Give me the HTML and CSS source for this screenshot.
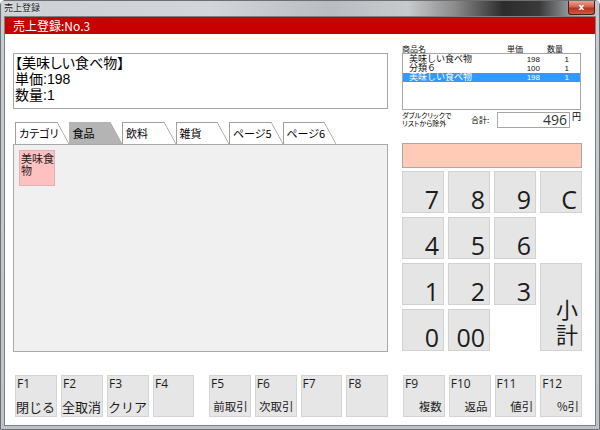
FILE: index.html
```html
<!DOCTYPE html>
<html lang="ja">
<head>
<meta charset="utf-8">
<title>売上登録</title>
<link rel="stylesheet" href="styles.css">
</head>
<body>
<div class="window">
  <div class="titlebar">
    <span class="title">売上登録</span>
    <span class="close">x</span>
  </div>
  <div class="client">
    <div class="header">売上登録:No.3</div>
    <div class="main">
      <div class="left">
        <div class="info">【美味しい食べ物】<br>単価:198<br>数量:1</div>
        <div class="tabs">
          <div class="tab">カテゴリ</div>
          <div class="tab active">食品</div>
          <div class="tab">飲料</div>
          <div class="tab">雑貨</div>
          <div class="tab">ページ5</div>
          <div class="tab">ページ6</div>
        </div>
        <div class="panel">
          <div class="item">美味食物</div>
        </div>
      </div>
      <div class="right">
        <div class="cols-head">
          <span class="ch-name">商品名</span>
          <span class="ch-price">単価</span>
          <span class="ch-qty">数量</span>
        </div>
        <div class="list">
          <div class="row"><span>美味しい食べ物</span><span class="num">198</span><span class="num">1</span></div>
          <div class="row"><span>分類６</span><span class="num">100</span><span class="num">1</span></div>
          <div class="row selected"><span>美味しい食べ物</span><span class="num">198</span><span class="num">1</span></div>
        </div>
        <div class="sum-row">
          <div class="hint">ダブルクリックで<br>リストから除外</div>
          <div class="sum-label">合計:</div>
          <div class="total">496</div>
          <div class="yen">円</div>
        </div>
        <div class="display"></div>
        <div class="keypad">
          <div class="key">7</div>
          <div class="key">8</div>
          <div class="key">9</div>
          <div class="key">C</div>
          <div class="key">4</div>
          <div class="key">5</div>
          <div class="key">6</div>
          <div class="key blank"></div>
          <div class="key">1</div>
          <div class="key">2</div>
          <div class="key">3</div>
          <div class="key subtotal"><span>小<br>計</span></div>
          <div class="key">0</div>
          <div class="key">00</div>
        </div>
      </div>
    </div>
    <div class="fkeys">
      <div class="group">
        <div class="fkey"><span class="fk-num">F1</span><span class="fk-name">閉じる</span></div>
        <div class="fkey"><span class="fk-num">F2</span><span class="fk-name">全取消</span></div>
        <div class="fkey"><span class="fk-num">F3</span><span class="fk-name">クリア</span></div>
        <div class="fkey"><span class="fk-num">F4</span><span class="fk-name"></span></div>
      </div>
      <div class="group">
        <div class="fkey"><span class="fk-num">F5</span><span class="fk-name small">前取引</span></div>
        <div class="fkey"><span class="fk-num">F6</span><span class="fk-name small">次取引</span></div>
        <div class="fkey"><span class="fk-num">F7</span><span class="fk-name small"></span></div>
        <div class="fkey"><span class="fk-num">F8</span><span class="fk-name small"></span></div>
      </div>
      <div class="group">
        <div class="fkey"><span class="fk-num">F9</span><span class="fk-name small">複数</span></div>
        <div class="fkey"><span class="fk-num">F10</span><span class="fk-name small">返品</span></div>
        <div class="fkey"><span class="fk-num">F11</span><span class="fk-name small">値引</span></div>
        <div class="fkey"><span class="fk-num">F12</span><span class="fk-name small">%引</span></div>
      </div>
    </div>
  </div>
</div>
</body>
</html>
```
FILE: styles.css
```css
* { box-sizing: border-box; }
html, body { margin: 0; padding: 0; }
body {
  width: 600px;
  height: 430px;
  overflow: hidden;
  font-family: "Noto Sans CJK JP", "Noto Sans", sans-serif;
  color: #000;
  background: #fff;
}
.window {
  width: 600px;
  height: 430px;
  display: flex;
  flex-direction: column;
  border: 1px solid #6c7075;
  border-radius: 5px 5px 0 0;
  background: linear-gradient(180deg, #c9cdd2, #bfc3c8);
}
.titlebar {
  height: 15px;
  display: flex;
  justify-content: space-between;
  align-items: flex-start;
  padding: 0 4px 0 3px;
  background: linear-gradient(90deg, #cdd1d6 0%, #d2d5d9 35%, #b9bdc1 55%, #c7cacd 68%, #8a8a8a 76%, #2c2c2c 84%, #3a3a3a 90%, #a6aaae 96%, #c4c8cc 100%);
}
.title {
  font-size: 9px;
  line-height: 14px;
  color: #1b1b1b;
  text-shadow: 0 0 3px #fff;
}
.close {
  width: 27px;
  height: 14px;
  border: 1px solid #4a1e16;
  border-top: none;
  border-radius: 0 0 3px 3px;
  background: linear-gradient(180deg, #e7a393 0%, #d2624c 45%, #b8321c 55%, #cf5a3e 100%);
  color: #fff;
  font-family: "DejaVu Sans", sans-serif;
  font-weight: bold;
  font-size: 9px;
  line-height: 12px;
  text-align: center;
}
.client {
  flex: 1;
  margin: 0 3px 3px;
  border: 1px solid #7c8085;
  background: #fff;
  display: flex;
  flex-direction: column;
}
.header {
  height: 17px;
  background: #c80000;
  color: #fff;
  font-size: 12px;
  line-height: 17px;
  padding-left: 8px;
}
.main {
  height: 318px;
  display: flex;
  gap: 14px;
  padding: 0 8px 0 8px;
}
.left {
  width: 375px;
  padding-top: 19px;
  display: flex;
  flex-direction: column;
}
.info {
  height: 56px;
  border: 1px solid #a6a6a6;
  padding: 1px;
  font-family: "Liberation Sans", "Noto Sans CJK JP", sans-serif;
  font-size: 14px;
  line-height: 16px;
  font-weight: 400;
  font-feature-settings: "palt";
}
.tabs {
  margin-top: 13px;
  height: 22px;
  display: flex;
  padding-left: 2px;
}
.tab {
  position: relative;
  width: 41.5px;
  height: 22px;
  margin-right: 12px;
  border-left: 1px solid #a0a0a0;
  border-top: 1px solid #a0a0a0;
  font-size: 11px;
  line-height: 20px;
  padding-left: 3px;
  white-space: nowrap;
  font-feature-settings: "palt";
  background: #fff;
}
.tab::after {
  content: "";
  position: absolute;
  left: 100%;
  top: -1px;
  width: 12px;
  height: 22px;
  background: linear-gradient(to top right, transparent calc(50% - 0.7px), #a0a0a0 50%, transparent calc(50% + 0.7px));
}
.tab.active {
  background: #b4b4b4;
  border-left-color: #b4b4b4;
  border-top-color: #b4b4b4;
}
.tab.active::after {
  background: linear-gradient(to top right, #b4b4b4 calc(50% - 0.7px), #a8a8a8 50%, transparent calc(50% + 0.7px));
}
.panel {
  flex: 1;
  background: #f0f0f0;
  border: 1px solid #a8a8a8;
  padding: 5px;
}
.item {
  width: 36px;
  height: 36px;
  background: #ffc0c0;
  border: 1px solid #dab4b4;
  font-size: 11px;
  line-height: 12px;
  padding: 1px 0 0 1px;
  word-break: break-all;
  color: #222;
}
.right {
  width: 180px;
  padding-top: 10px;
  display: flex;
  flex-direction: column;
}
.cols-head {
  height: 9px;
  display: flex;
  font-size: 8px;
  line-height: 9px;
  color: #111;
}
.ch-name { width: 105px; }
.ch-price { width: 40px; }
.list {
  width: 179px;
  height: 57px;
  border: 1px solid #a6a6a6;
  padding-top: 1px;
}
.row {
  display: grid;
  grid-template-columns: 1fr 40px 29px;
  height: 9px;
  font-family: "Liberation Sans", "Noto Sans CJK JP", sans-serif;
  font-size: 9px;
  line-height: 9px;
  padding: 0 11px 0 6px;
  color: #111;
  white-space: nowrap;
}
.row .num { text-align: right; font-size: 8px; }
.row.selected { background: #3399ff; color: #fff; }
.sum-row {
  margin-top: 2px;
  height: 16px;
  display: flex;
  align-items: flex-start;
}
.hint {
  width: 69px;
  font-family: "Liberation Sans", "Noto Sans CJK JP", sans-serif;
  font-size: 7px;
  line-height: 8px;
  font-feature-settings: "palt";
  white-space: nowrap;
}
.sum-label {
  width: 26px;
  font-size: 8px;
  line-height: 9px;
  padding-top: 3px;
}
.total {
  width: 73px;
  height: 16px;
  border: 1px solid #a6a6a6;
  text-align: right;
  padding-right: 2px;
  font-family: "Open Sans", sans-serif;
  font-size: 14px;
  line-height: 14px;
  color: #333;
}
.yen {
  margin-left: 2px;
  font-size: 9px;
  line-height: 10px;
}
.display {
  margin-top: 15px;
  height: 25px;
  background: #ffcbb6;
  border: 1px solid #a8a8a8;
}
.keypad {
  margin-top: 3px;
  display: grid;
  grid-template-columns: repeat(4, 42px);
  grid-template-rows: repeat(4, 42px);
  gap: 4px;
}
.key {
  background: #e5e5e5;
  border: 1px solid #d2d2d2;
  display: flex;
  justify-content: flex-end;
  align-items: flex-end;
  padding-right: 4px;
  font-family: "Open Sans", sans-serif;
  font-size: 25px;
  line-height: 1;
  color: #1c1c1c;
}
.key.blank { background: none; border: none; }
.key.subtotal {
  grid-column: 4;
  grid-row: 3 / span 2;
  font-family: "Liberation Sans", "Noto Sans CJK JP", sans-serif;
  font-size: 22px;
  line-height: 25px;
  padding: 0 3px 2px 0;
}
.fkeys {
  margin-top: 23px;
  display: flex;
  gap: 15px;
  padding-left: 10px;
}
.group {
  width: 179px;
  display: grid;
  grid-template-columns: repeat(4, 1fr);
  gap: 4px;
}
.fkey {
  height: 42px;
  background: #e6e6e6;
  border: 1px solid #d4d4d4;
  display: flex;
  flex-direction: column;
  justify-content: space-between;
  padding: 1px 1px 1px 0;
}
.fk-num {
  font-family: "Open Sans", sans-serif;
  font-size: 12px;
  line-height: 14px;
  color: #1c1c1c;
  padding-left: 1px;
}
.fk-name {
  font-size: 13px;
  line-height: 17px;
  white-space: nowrap;
  color: #1c1c1c;
  min-height: 17px;
}
.fk-name.small {
  font-size: 11.5px;
  text-align: right;
  padding-right: 1px;
}
```
